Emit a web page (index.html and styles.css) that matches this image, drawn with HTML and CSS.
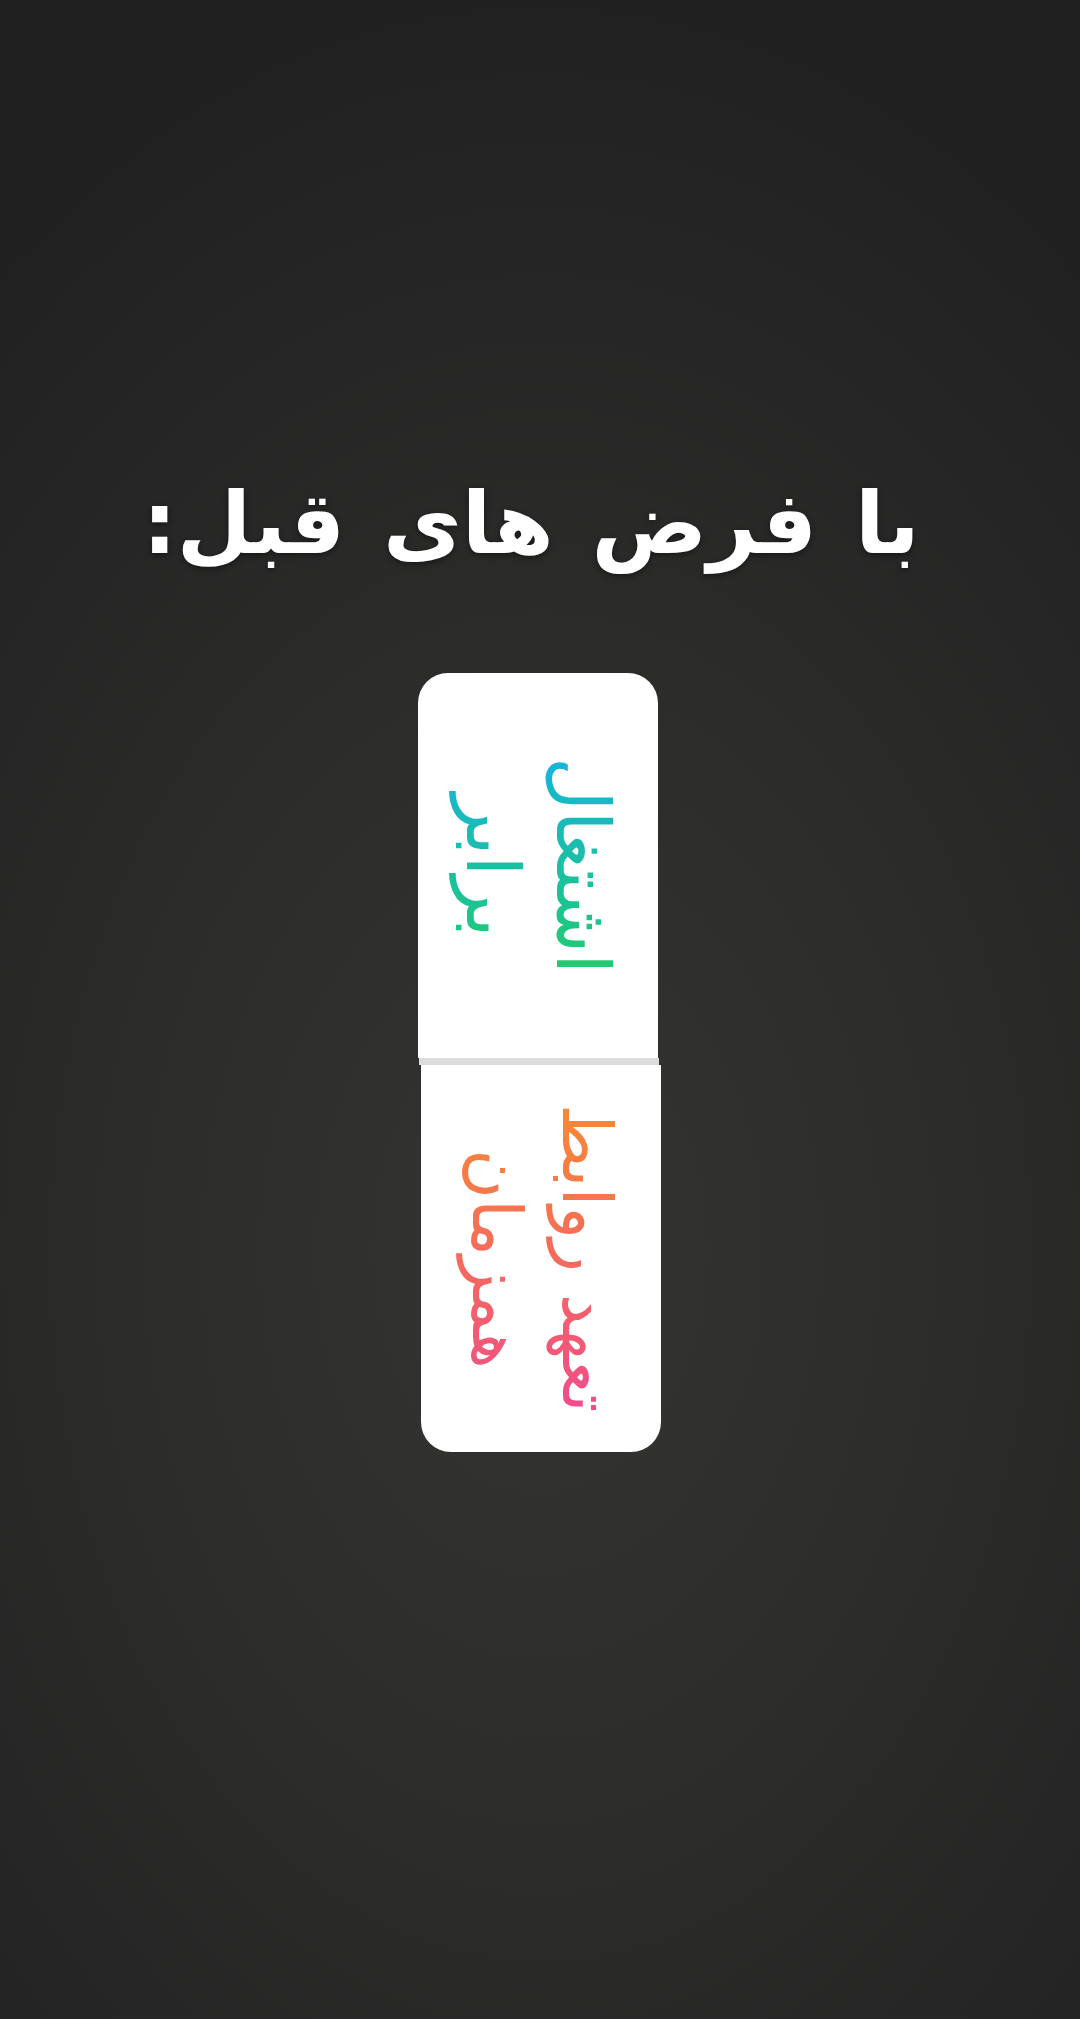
FILE: index.html
```html
<!DOCTYPE html>
<html lang="fa">
<head>
<meta charset="utf-8">
<title>با فرض های قبل</title>
<link rel="stylesheet" href="styles.css">
</head>
<body>
<main class="page">
  <h1 class="title" dir="rtl">با فرض های قبل:</h1>
  <div class="card">
    <section class="half half-top">
      <p class="label label-cool" dir="rtl">اشتغال<br>برابر</p>
    </section>
    <div class="divider"></div>
    <section class="half half-bottom">
      <p class="label label-warm" dir="rtl">تعهد روابط<br>همزمان</p>
    </section>
  </div>
</main>
</body>
</html>
```

FILE: styles.css
```css
html, body {
  margin: 0;
  padding: 0;
}
body {
  width: 1080px;
  height: 2019px;
  overflow: hidden;
  background: radial-gradient(ellipse 900px 1300px at 50% 62%, #343433 0%, #2c2c2b 45%, #1f201f 100%);
  font-family: "DejaVu Sans", sans-serif;
}
.page {
  display: flex;
  flex-direction: column;
  align-items: center;
  padding-top: 453px;
}
.title {
  margin: 0 18px 0 0;
  color: #ffffff;
  font-family: "DejaVu Sans", sans-serif;
  font-weight: bold;
  font-size: 86px;
  line-height: 140px;
  word-spacing: 8px;
  text-shadow: 0 2px 6px rgba(0,0,0,0.45);
  white-space: nowrap;
}
.card {
  margin-top: 80px;
  display: flex;
  flex-direction: column;
  width: 244px;
}
.half {
  background: #ffffff;
  display: flex;
  align-items: center;
  justify-content: center;
}
.half-top {
  height: 385px;
  border-radius: 30px 30px 0 0;
  width: 240px;
}
.half-bottom {
  height: 387px;
  border-radius: 0 0 30px 30px;
  width: 240px;
  margin-left: 3px;
}
.divider {
  height: 7px;
  background: #dcdcdc;
  width: 240px;
  margin-left: 1px;
}
.label {
  margin: 0;
  writing-mode: vertical-rl;
  text-align: center;
  font-family: "DejaVu Sans", sans-serif;
  font-size: 74px;
  line-height: 90px;
  -webkit-background-clip: text;
  background-clip: text;
  color: transparent;
}
.label-cool {
  background-image: linear-gradient(to bottom, #16b4dc 0%, #1dc48e 70%, #22cc6c 100%);
}
.label-warm {
  font-size: 68px;
  background-image: linear-gradient(to bottom, #f58a34 0%, #f56a5c 50%, #f04b8c 100%);
}
```
